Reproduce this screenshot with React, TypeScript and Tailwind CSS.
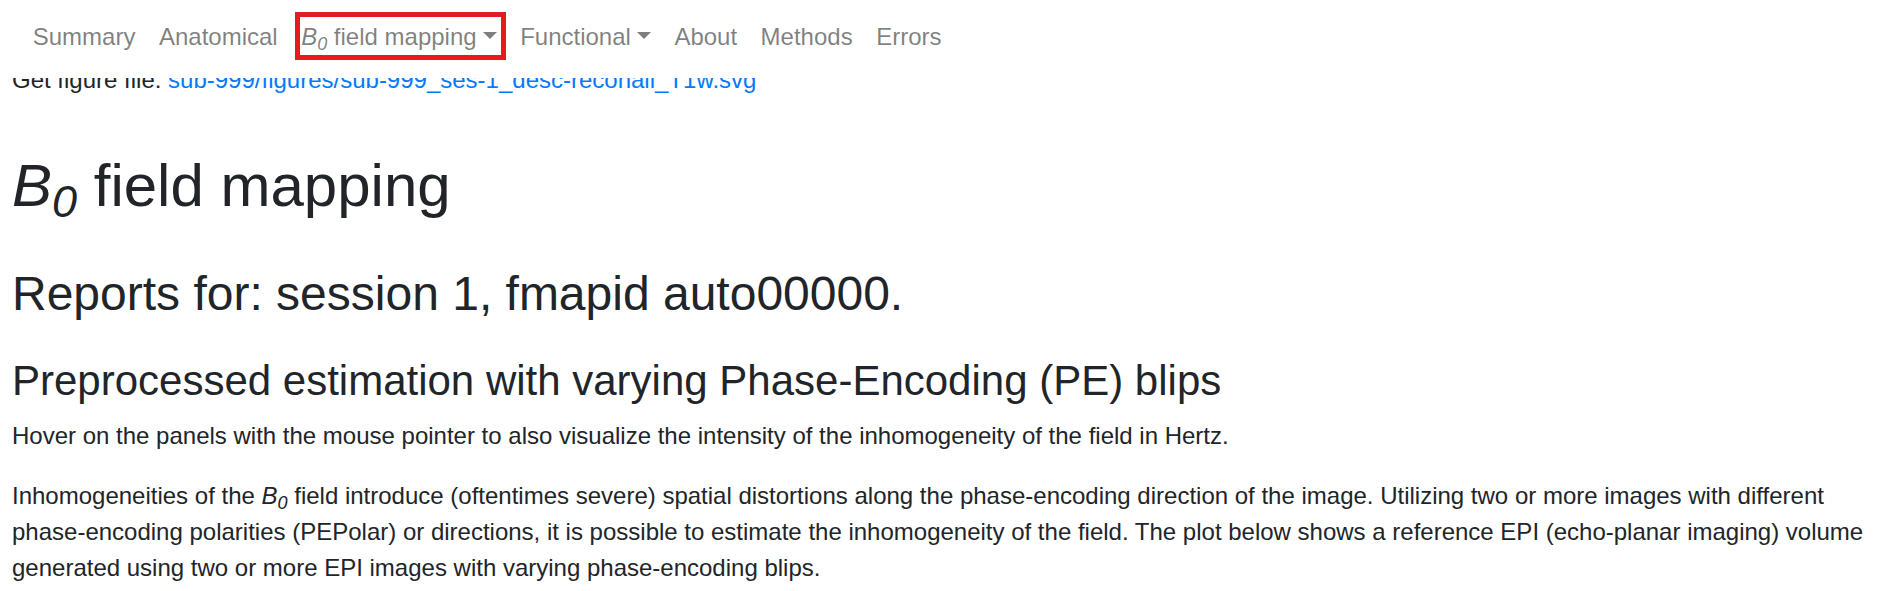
import React from 'react';

interface NavItem {
  label: React.ReactNode;
  dropdown?: boolean;
  highlighted?: boolean;
}

const B0 = () => (
  <i>
    B<sub>0</sub>
  </i>
);

const navItems: NavItem[] = [
  { label: 'Summary' },
  { label: 'Anatomical' },
  {
    label: (
      <>
        <B0 /> field mapping
      </>
    ),
    dropdown: true,
    highlighted: true,
  },
  { label: 'Functional', dropdown: true },
  { label: 'About' },
  { label: 'Methods' },
  { label: 'Errors' },
];

function Navbar() {
  return (
    <nav className="absolute top-0 left-0 right-0 z-10 bg-white pt-[7px] pb-[11px] pl-[21px]">
      <ul className="flex items-center">
        {navItems.map((item, i) => (
          <li key={i} className="relative">
            <a className="block px-[11.75px] py-3 text-[24px] leading-[36px] text-black/50 whitespace-nowrap cursor-pointer">
              {item.label}
              {item.dropdown && (
                <span className="inline-block ml-[6px] align-[6px] border-t-[7px] border-x-[7px] border-b-0 border-x-transparent border-t-black/50" />
              )}
            </a>
            {/* annotation box drawn over the active menu entry */}
            {item.highlighted && (
              <span className="absolute left-[6px] right-[2px] top-[5px] bottom-[7px] border-[5px] border-[#e31b23] pointer-events-none" />
            )}
          </li>
        ))}
      </ul>
    </nav>
  );
}

export default function App() {
  return (
    <div className="relative min-h-[591px] bg-white text-[#212529] font-['Liberation_Sans',Arial,sans-serif] overflow-hidden">
      <Navbar />

      <main className="px-3 pt-[62px]">
        <div className="text-[24px] leading-[36px]">
          Get figure file:{' '}
          <a className="text-[#007bff]">sub-999/figures/sub-999_ses-1_desc-reconall_T1w.svg</a>
        </div>

        <h1 className="mt-[52px] text-[60px] leading-[72px] font-normal">
          <B0 /> field mapping
        </h1>

        <h2 className="mt-[43px] text-[48px] leading-[58px] font-normal">
          Reports for: session 1, fmapid auto00000.
        </h2>

        <h3 className="mt-[33px] mb-3 text-[42px] leading-[50px] font-normal">
          Preprocessed estimation with varying Phase-Encoding (PE) blips
        </h3>

        <p className="mb-6 text-[24px] leading-[36px]">
          Hover on the panels with the mouse pointer to also visualize the intensity of the
          inhomogeneity of the field in Hertz.
        </p>

        <p className="text-[24px] leading-[36px]">
          Inhomogeneities of the <B0 /> field introduce (oftentimes severe) spatial distortions
          along the phase-encoding direction of the image. Utilizing two or more images with
          different phase-encoding polarities (PEPolar) or directions, it is possible to estimate
          the inhomogeneity of the field. The plot below shows a reference EPI (echo-planar
          imaging) volume generated using two or more EPI images with varying phase-encoding
          blips.
        </p>
      </main>
    </div>
  );
}
